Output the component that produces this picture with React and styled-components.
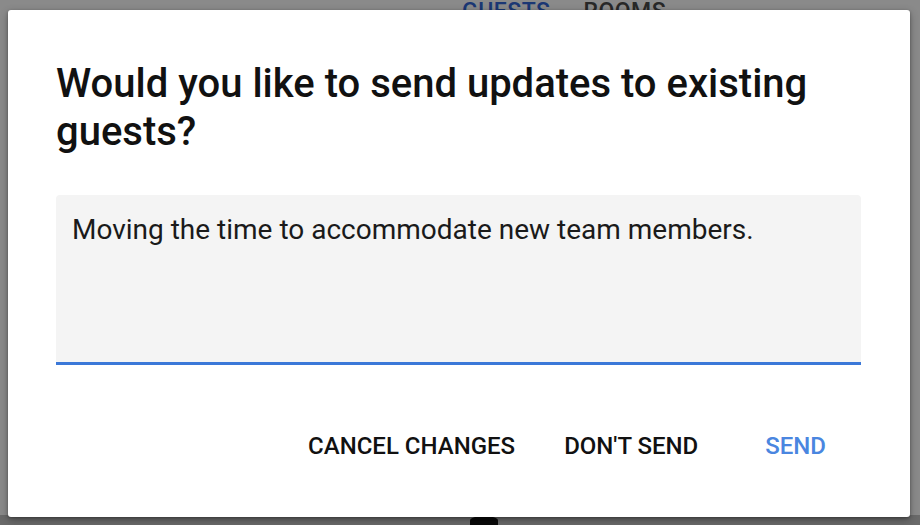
import React from "react";
import styled, { createGlobalStyle } from "styled-components";

const Global = createGlobalStyle`
  html, body { margin: 0; padding: 0; }
  body { font-family: Roboto, "Liberation Sans", Arial, sans-serif; background: #8a8a8a; }
`;

const Page = styled.div`
  position: relative;
  width: 920px;
  height: 525px;
  overflow: hidden;
  background: #ffffff;
  display: flex;
  flex-direction: column;
`;

const TabBar = styled.div`
  display: flex;
  gap: 33px;
  padding: 0 0 0 462px;
`;

const Tab = styled.div`
  font-size: 23px;
  line-height: 23px;
  font-weight: 500;
  letter-spacing: 0.5px;
  text-transform: uppercase;
  color: ${(p) => (p.$active ? "#3367d6" : "#4a4a4a")};
`;

const Spacer = styled.div`
  flex: 1;
`;

const Footer = styled.div`
  height: 10px;
  background: #c4c4c4;
  position: relative;
`;

const FooterMark = styled.div`
  position: absolute;
  left: 470px;
  top: 1px;
  width: 28px;
  height: 9px;
  background: #111;
  border-radius: 50% 50% 0 0;
`;

const Scrim = styled.div`
  position: absolute;
  inset: 0;
  background: rgba(0, 0, 0, 0.46);
  display: flex;
  padding: 10px 10px 8px 8px;
  box-sizing: border-box;
`;

const Dialog = styled.div`
  flex: 1;
  background: #ffffff;
  border-radius: 3px;
  box-shadow: 0 3px 8px rgba(0, 0, 0, 0.3), 0 1px 3px rgba(0, 0, 0, 0.3);
  padding: 0 49px 0 48px;
  display: flex;
  flex-direction: column;
`;

const Title = styled.h2`
  margin: 50px 0 0;
  font-size: 40px;
  line-height: 48px;
  font-weight: 500;
  color: #111111;
`;

const Field = styled.div`
  margin-top: 39px;
  background: #f4f4f4;
  border-radius: 4px 4px 0 0;
  border-bottom: 3px solid #3b78d8;
  padding: 15px 16px 14px;
  box-sizing: border-box;
  height: 170px;
  font-size: 28px;
  line-height: 40px;
  color: #1a1a1a;
`;

const Actions = styled.div`
  display: flex;
  justify-content: flex-end;
  align-items: center;
  margin-top: 58px;
  gap: 17px;
  padding-right: 7px;
`;

const Button = styled.button`
  border: none;
  background: transparent;
  font-family: Roboto, "Liberation Sans", Arial, sans-serif;
  font-size: 24px;
  font-weight: 500;
  text-transform: uppercase;
  color: ${(p) => (p.$primary ? "#4a86e0" : "#111111")};
  padding: 8px ${(p) => (p.$primary ? "28px" : "16px")};
  margin-left: ${(p) => (p.$primary ? "6px" : "0")};
  line-height: 30px;
  cursor: pointer;
`;

export default function App() {
  return (
    <Page>
      <Global />
      <TabBar>
        <Tab $active>Guests</Tab>
        <Tab>Rooms</Tab>
      </TabBar>
      <Spacer />
      <Footer>
        <FooterMark />
      </Footer>
      <Scrim>
        <Dialog>
          <Title>Would you like to send updates to existing guests?</Title>
          <Field>Moving the time to accommodate new team members.</Field>
          <Actions>
            <Button>Cancel changes</Button>
            <Button>Don't send</Button>
            <Button $primary>Send</Button>
          </Actions>
        </Dialog>
      </Scrim>
    </Page>
  );
}
